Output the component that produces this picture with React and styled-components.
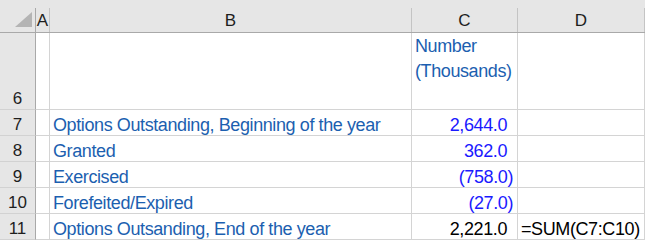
import styled, { createGlobalStyle } from 'styled-components'

const GlobalStyle = createGlobalStyle`
	html, body {
		margin: 0;
		padding: 0;
		background: #fff;
		overflow: hidden;
	}
	body {
		font-family: "Liberation Sans", Arial, sans-serif;
	}
`

const Sheet = styled.div`
	display: grid;
	grid-template-columns: 36px 14px 362px 106px 1fr;
	grid-template-rows: 33px 77px repeat(5, 26px);
	width: 645px;
	height: 240px;
	font-size: 18px;
	letter-spacing: -0.4px;
`

const ColHead = styled.div`
	box-sizing: border-box;
	background: #e6e6e6;
	border-bottom: 1px solid #a9a9a9;
	padding-top: 8px;
	display: flex;
`

const ColLabel = styled.div`
	flex: 1;
	display: flex;
	align-items: center;
	justify-content: center;
	border-right: 1px solid ${p => (p.$corner ? '#a9a9a9' : '#c4c4c4')};
	color: #1e1e1e;
	font-size: 17px;
	letter-spacing: 0;
	padding-top: 1px;
`

const Corner = styled(ColLabel)`
	justify-content: flex-end;
	align-items: flex-start;
	padding: 4px 3px 0 0;
`

const RowHead = styled.div`
	box-sizing: border-box;
	background: #e6e6e6;
	border-right: 1px solid #a9a9a9;
	border-bottom: 1px solid #d2d2d2;
	display: flex;
	align-items: flex-end;
	justify-content: center;
	line-height: 20px;
	color: #1e1e1e;
	font-size: 17px;
	letter-spacing: 0;
`

const Cell = styled.div`
	box-sizing: border-box;
	border-right: 1px solid #d4d4d4;
	border-bottom: 1px solid #d4d4d4;
	display: flex;
	align-items: ${p => (p.$top ? 'flex-start' : 'flex-end')};
	justify-content: ${p => (p.$right ? 'flex-end' : 'flex-start')};
	padding: ${p => (p.$top ? '1px 0 0 3px' : '0 3px')};
	padding-right: ${p => p.$pad || 3}px;
	line-height: ${p => (p.$top ? 25 : 20)}px;
	color: ${p => p.$color || '#000'};
	white-space: ${p => (p.$top ? 'normal' : 'nowrap')};
	overflow: hidden;
`

const LABEL = '#1c5fb0'
const NUM = '#1a1aff'

const rows = [
	{ n: 7, label: 'Options Outstanding, Beginning of the year', value: '2,644.0' },
	{ n: 8, label: 'Granted', value: '362.0' },
	{ n: 9, label: 'Exercised', value: '(758.0)', neg: true },
	{ n: 10, label: 'Forefeited/Expired', value: '(27.0)', neg: true },
	{ n: 11, label: 'Options Outsanding, End of the year', value: '2,221.0', total: true, formula: '=SUM(C7:C10)' },
]

function SelectAll() {
	return (
		<svg width="17" height="15" viewBox="0 0 17 15">
			<polygon points="17,0 17,15 0,15" fill="#b4b4b4" />
		</svg>
	)
}

export default function App() {
	return (
		<>
			<GlobalStyle />
			<Sheet>
				<ColHead><Corner $corner><SelectAll /></Corner></ColHead>
				<ColHead><ColLabel>A</ColLabel></ColHead>
				<ColHead><ColLabel>B</ColLabel></ColHead>
				<ColHead><ColLabel>C</ColLabel></ColHead>
				<ColHead><ColLabel>D</ColLabel></ColHead>

				<RowHead>6</RowHead>
				<Cell />
				<Cell />
				<Cell $top $color={LABEL}>Number (Thousands)</Cell>
				<Cell />

				{rows.map(r => (
					<Row key={r.n} {...r} />
				))}
			</Sheet>
		</>
	)
}

function Row({ n, label, value, neg, total, formula }) {
	return (
		<>
			<RowHead>{n}</RowHead>
			<Cell />
			<Cell $color={LABEL}>{label}</Cell>
			<Cell $right $pad={neg ? 4 : 10} $color={total ? '#000' : NUM}>{value}</Cell>
			<Cell $color="#000">{formula}</Cell>
		</>
	)
}
